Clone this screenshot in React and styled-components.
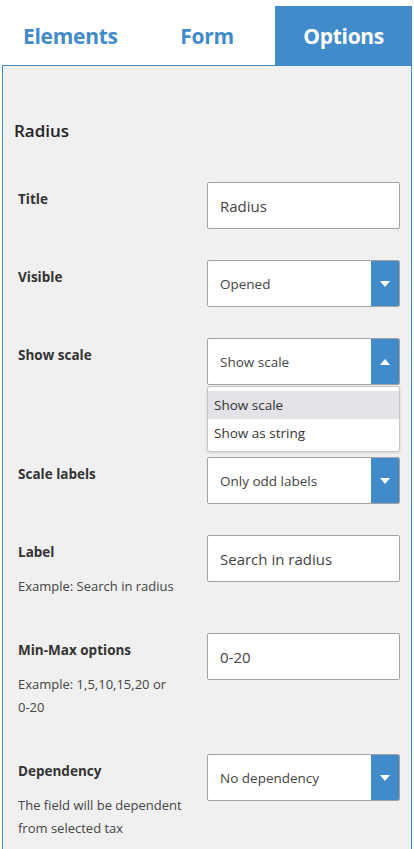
import React from 'react'
import styled, { createGlobalStyle } from 'styled-components'

const GlobalStyle = createGlobalStyle`
  body {
    margin: 0;
    background: #fff;
    font-family: "Open Sans", "Noto Sans", sans-serif;
    color: #333;
  }
`

const Wrapper = styled.div`
  margin: 0 2px;
  padding-top: 6px;
`

const Tabs = styled.div`
  display: grid;
  grid-template-columns: repeat(3, 1fr);
`

const Tab = styled.div`
  height: 59px;
  display: flex;
  align-items: center;
  justify-content: center;
  font-size: 21px;
  font-weight: 700;
  letter-spacing: -0.3px;
  color: ${props => (props.$active ? '#fff' : '#428bca')};
  background: ${props => (props.$active ? '#428bca' : 'transparent')};
`

const Panel = styled.div`
  border: 1px solid #428bca;
  background: #f0f0f0;
  padding: 53px 11px 40px;
  min-height: 800px;
`

const Heading = styled.h3`
  margin: 0 0 39px;
  font-size: 17px;
  line-height: 24px;
  font-weight: 600;
  color: #222;
`

const Row = styled.div`
  display: grid;
  grid-template-columns: 1fr 193px;
  align-items: start;
  padding-left: 4px;
  margin-bottom: 31px;
`

const Info = styled.div`
  padding: 6px 0 4px;
`

const Label = styled.div`
  font-size: 13.5px;
  line-height: 22px;
  font-weight: 700;
  color: #333;
`

const Hint = styled.div`
  margin-top: 12px;
  font-size: 13px;
  line-height: 23px;
  color: #444;
  max-width: 170px;

  span {
    white-space: nowrap;
  }
`

const Field = styled.div`
  position: relative;
  margin-bottom: ${props => (props.$open ? '41px' : '0')};
`

const Input = styled.div`
  box-sizing: border-box;
  height: 47px;
  background: #fff;
  border: 1px solid #a3a3a3;
  border-radius: 2px;
  padding-left: 12px;
  display: flex;
  align-items: center;
  font-size: 15px;
  color: #444;
`

const Select = styled.div`
  box-sizing: border-box;
  height: 47px;
  background: #fff;
  border: 1px solid #a3a3a3;
  border-radius: 2px;
  display: flex;
  align-items: stretch;
  overflow: hidden;
`

const SelectValue = styled.div`
  flex: 1;
  display: flex;
  align-items: center;
  padding-left: 12px;
  font-size: 13.5px;
  color: #444;
`

const Caret = styled.div`
  width: 28px;
  background: #428bca;
  display: flex;
  align-items: center;
  justify-content: center;
`

const Menu = styled.div`
  position: absolute;
  top: 48px;
  left: 0;
  right: 0;
  box-sizing: border-box;
  background: #fff;
  border: 1px solid #c4c4c4;
  border-radius: 3px;
  box-shadow: 0 1px 3px rgba(0, 0, 0, 0.12);
  padding: 4px 0;
  z-index: 5;
`

const Option = styled.div`
  height: 28px;
  display: flex;
  align-items: center;
  padding-left: 6px;
  font-size: 13.5px;
  color: #333;
  background: ${props => (props.$selected ? '#e2e2e7' : 'transparent')};
`

const Triangle = ({ up }) => (
  <svg width="10" height="6" viewBox="0 0 10 6">
    <path d={up ? 'M0 6 L5 0 L10 6 Z' : 'M0 0 L10 0 L5 6 Z'} fill="#fff" />
  </svg>
)

const Dropdown = ({ value, open, options }) => (
  <Field $open={open}>
    <Select>
      <SelectValue>{value}</SelectValue>
      <Caret>
        <Triangle up={open} />
      </Caret>
    </Select>
    {open && (
      <Menu>
        {options.map((o, i) => (
          <Option key={o} $selected={i === 0}>{o}</Option>
        ))}
      </Menu>
    )}
  </Field>
)

const App = () => {
  return (
    <Wrapper>
      <GlobalStyle />
      <Tabs>
        <Tab>Elements</Tab>
        <Tab>Form</Tab>
        <Tab $active>Options</Tab>
      </Tabs>
      <Panel>
        <Heading>Radius</Heading>

        <Row>
          <Info><Label>Title</Label></Info>
          <Field><Input>Radius</Input></Field>
        </Row>

        <Row>
          <Info><Label>Visible</Label></Info>
          <Dropdown value="Opened" />
        </Row>

        <Row>
          <Info><Label>Show scale</Label></Info>
          <Dropdown value="Show scale" open options={['Show scale', 'Show as string']} />
        </Row>

        <Row>
          <Info><Label>Scale labels</Label></Info>
          <Dropdown value="Only odd labels" />
        </Row>

        <Row>
          <Info>
            <Label>Label</Label>
            <Hint>Example: Search in radius</Hint>
          </Info>
          <Field><Input>Search in radius</Input></Field>
        </Row>

        <Row>
          <Info>
            <Label>Min-Max options</Label>
            <Hint>Example: 1,5,10,15,20 or <span>0-20</span></Hint>
          </Info>
          <Field><Input>0-20</Input></Field>
        </Row>

        <Row>
          <Info>
            <Label>Dependency</Label>
            <Hint>The field will be dependent from selected tax</Hint>
          </Info>
          <Dropdown value="No dependency" />
        </Row>
      </Panel>
    </Wrapper>
  )
}

export default App
